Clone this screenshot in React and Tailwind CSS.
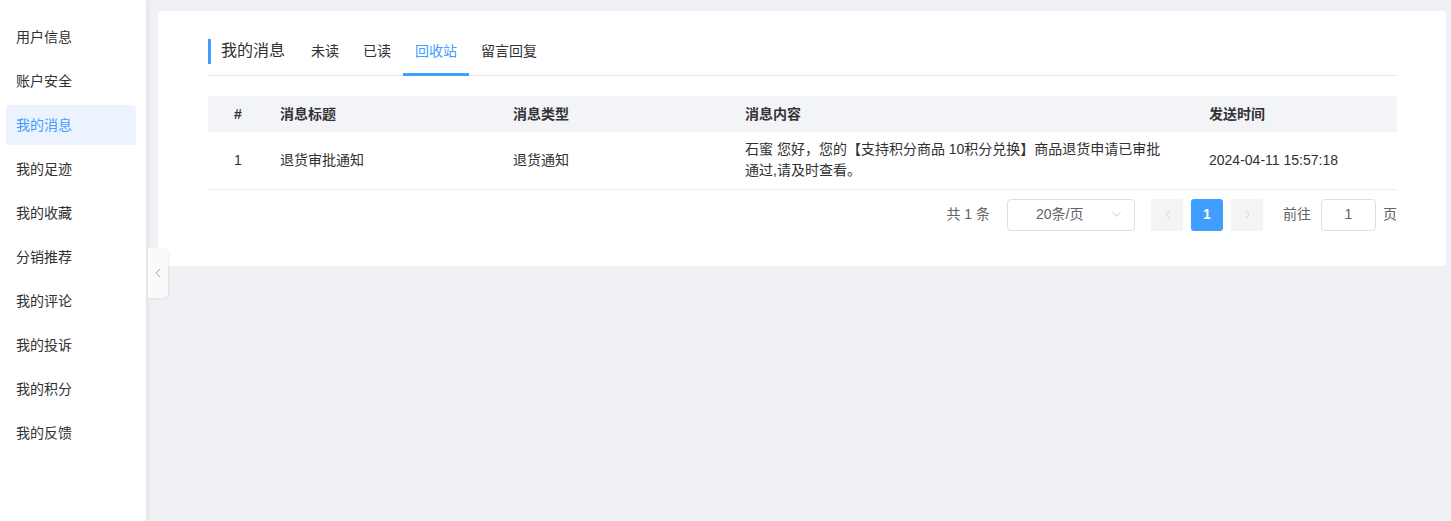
import { ChevronLeft, ChevronRight, ChevronDown } from "lucide-react"

const menu = ["用户信息", "账户安全", "我的消息", "我的足迹", "我的收藏", "分销推荐", "我的评论", "我的投诉", "我的积分", "我的反馈"]
const tabs = ["未读", "已读", "回收站", "留言回复"]

export default function App() {
  return (
    <div
      className="flex h-[521px] w-full bg-[#f0f1f5] text-[#303133]"
      style={{ fontFamily: '"Liberation Sans", "Noto Sans CJK SC", sans-serif' }}
    >
      {/* Sidebar */}
      <aside className="relative z-10 w-[146px] shrink-0 bg-white pl-[6px] pr-[10px] pt-[17px] shadow-[2px_0_4px_rgba(0,0,0,0.06)]">
        <nav className="flex flex-col gap-[4px]">
          {menu.map((item) => (
            <div
              key={item}
              className={`flex h-[40px] items-center rounded-[4px] pl-[10px] text-[14px] ${
                item === "我的消息" ? "bg-[#ecf2fe] text-[#409eff]" : "text-[#303133]"
              }`}
            >
              {item}
            </div>
          ))}
        </nav>
        {/* collapse handle */}
        <div className="absolute left-[148px] top-[248px] flex h-[50px] w-[20px] items-center justify-center rounded-r-[5px] bg-[#fafafa] shadow-[1px_1px_3px_rgba(0,0,0,0.08)]">
          <ChevronLeft size={16} strokeWidth={1.5} className="text-[#a8abb2]" />
        </div>
      </aside>

      {/* Main */}
      <main className="flex-1 pl-[12px] pr-[5px] pt-[11px]">
        <div className="rounded-[4px] bg-white px-[50px] pb-[35px] pr-[49px] pt-[6px]">
          {/* Tabs */}
          <div className="flex h-[59px] items-end border-b border-[#e4e7ed]">
            <div className="flex h-[48px] items-center">
              <span className="h-[25px] w-[3px] bg-[#409eff]" />
              <span className="ml-[10px] mr-[14px] text-[16px] text-[#303133]">我的消息</span>
            </div>
            {tabs.map((t) => (
              <div
                key={t}
                className={`relative flex h-[48px] items-center px-[12px] text-[14px] ${
                  t === "回收站" ? "text-[#409eff]" : "text-[#303133]"
                }`}
              >
                {t}
                {t === "回收站" && <span className="absolute bottom-[-1px] left-0 right-0 h-[3px] bg-[#409eff]" />}
              </div>
            ))}
          </div>

          {/* Table */}
          <table className="mt-[20px] w-full table-fixed border-collapse text-[14px]">
            <colgroup>
              <col className="w-[60px]" />
              <col className="w-[233px]" />
              <col className="w-[232px]" />
              <col className="w-[464px]" />
              <col className="w-[200px]" />
            </colgroup>
            <thead>
              <tr className="h-[36px] bg-[#f3f4f8] text-left font-bold text-[#333]">
                <th className="text-center">#</th>
                <th className="px-[12px]">消息标题</th>
                <th className="px-[12px]">消息类型</th>
                <th className="px-[12px]">消息内容</th>
                <th className="px-[12px]">发送时间</th>
              </tr>
            </thead>
            <tbody>
              <tr className="h-[57px] border-b border-[#ebeef5] text-[#303133]">
                <td className="text-center">1</td>
                <td className="px-[12px]">退货审批通知</td>
                <td className="px-[12px]">退货通知</td>
                <td className="pl-[12px] pr-[30px] leading-[21px]">
                  石蜜 您好，您的【支持积分商品 10积分兑换】商品退货申请已审批通过,请及时查看。
                </td>
                <td className="px-[12px]">2024-04-11 15:57:18</td>
              </tr>
            </tbody>
          </table>

          {/* Pagination */}
          <div className="mt-[9px] flex items-center justify-end text-[14px] text-[#606266]">
            <span className="mr-[17px]">共 1 条</span>
            <div className="mr-[16px] flex h-[32px] w-[128px] items-center rounded-[4px] border border-[#dcdfe6] pl-[28px] pr-[10px]">
              <span className="flex-1">20条/页</span>
              <ChevronDown size={15} strokeWidth={1.5} className="text-[#c0c4cc]" />
            </div>
            <div className="flex items-center gap-[8px]">
              <div className="flex h-[32px] w-[32px] items-center justify-center rounded-[3px] bg-[#f4f4f5]">
                <ChevronLeft size={13} strokeWidth={1.5} className="text-[#c0c4cc]" />
              </div>
              <div className="flex h-[32px] w-[32px] items-center justify-center rounded-[3px] bg-[#409eff] font-bold text-white">
                1
              </div>
              <div className="flex h-[32px] w-[32px] items-center justify-center rounded-[3px] bg-[#f4f4f5]">
                <ChevronRight size={13} strokeWidth={1.5} className="text-[#c0c4cc]" />
              </div>
            </div>
            <span className="ml-[20px] mr-[10px]">前往</span>
            <div className="flex h-[32px] w-[55px] items-center justify-center rounded-[4px] border border-[#dcdfe6]">
              1
            </div>
            <span className="ml-[7px]">页</span>
          </div>
        </div>
      </main>
    </div>
  )
}
